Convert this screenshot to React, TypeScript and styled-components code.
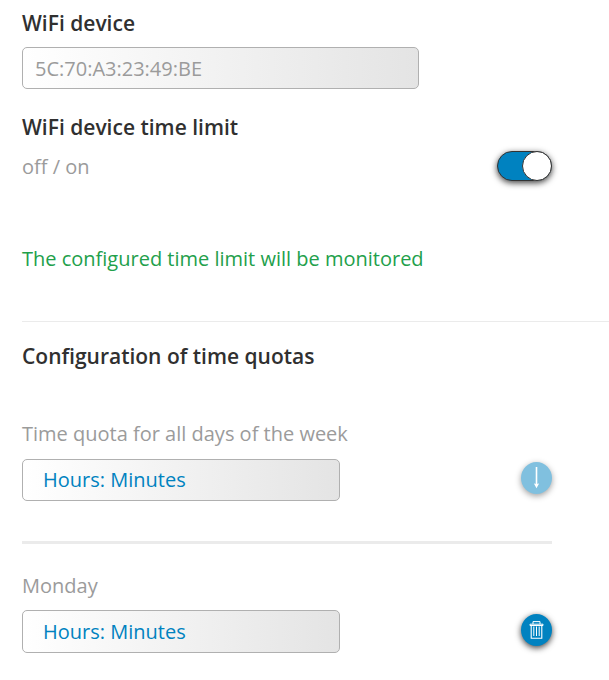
import React from "react";
import styled, { createGlobalStyle } from "styled-components";

const GlobalStyle = createGlobalStyle`
  * { box-sizing: border-box; }
  body {
    margin: 0;
    background: #fff;
    font-family: "Open Sans", "Noto Sans", sans-serif;
    font-size: 20px;
    line-height: 28px;
    color: #9b9b9b;
  }
`;

const Page = styled.main`
  display: flex;
  flex-direction: column;
  height: 680px;
  padding: 9px 0 0 22px;
  overflow: hidden;
`;

const Heading = styled.h2<{ $top?: number }>`
  margin: ${(p) => p.$top ?? 0}px 0 0;
  font-size: 21px;
  font-weight: 600;
  line-height: 28px;
  color: #303030;
`;

const Field = styled.div<{ $width: number; $height?: number; $inset?: number; $accent?: boolean }>`
  display: flex;
  align-items: center;
  flex: none;
  width: ${(p) => p.$width}px;
  height: ${(p) => p.$height ?? 42}px;
  padding-left: ${(p) => p.$inset ?? 12}px;
  border: 1px solid #b0b0b0;
  border-radius: 5px;
  background: linear-gradient(to right, #fff, #e4e4e4);
  color: ${(p) => (p.$accent ? "#0082c0" : "#9b9b9b")};
`;

const DeviceField = styled(Field)`
  margin: 10px 0 24px;
  padding-top: 2px;
`;

const Row = styled.div`
  display: flex;
  justify-content: space-between;
  width: 530px;
`;

const SwitchRow = styled(Row)`
  height: 30px;
  margin-top: 10px;
`;

const OptionLabel = styled.span`
  margin-top: 2px;
`;

const Switch = styled.button`
  display: flex;
  justify-content: flex-end;
  width: 55px;
  height: 30px;
  padding: 0;
  border: 1px solid #333;
  border-radius: 15px;
  background: #0082c0;
  box-shadow: 0 2px 6px rgba(0, 0, 0, 0.75);
`;

const Knob = styled.span`
  width: 30px;
  height: 30px;
  margin: -1px;
  border: 1px solid #333;
  border-radius: 50%;
  background: #fff;
`;

const Status = styled.p`
  margin: 64px 0 48px;
  color: #22a04b;
`;

const Divider = styled.hr`
  flex: none;
  width: 100%;
  height: 1px;
  margin: 0;
  border: 0;
  background: #ebebeb;
`;

const QuotaDivider = styled(Divider)`
  width: 530px;
  height: 3px;
  margin: 40px 0 28px;
`;

const QuotaLabel = styled.label<{ $top?: number; $gap: number }>`
  margin: ${(p) => p.$top ?? 0}px 0 ${(p) => p.$gap}px;
`;

const RoundButton = styled.button<{ $muted?: boolean; $top: number }>`
  display: flex;
  align-items: center;
  justify-content: center;
  width: 31px;
  height: 32px;
  margin-top: ${(p) => p.$top}px;
  padding: 0;
  border: 0;
  border-radius: 50%;
  background: ${(p) => (p.$muted ? "#80c0df" : "#0082c0")};
  box-shadow: 0 2px 6px rgba(0, 0, 0, ${(p) => (p.$muted ? 0.38 : 0.75)});
`;

const ArrowIcon = () => (
  <svg width="31" height="32" viewBox="0 0 31 32" fill="none">
    <path d="M15.5 5v17" stroke="#fff" strokeWidth="1.6" />
    <path d="M12.9 21.4l2.6.6 2.6-.6-2.6 4.8z" fill="#fff" />
  </svg>
);

const TrashIcon = () => (
  <svg width="31" height="32" viewBox="0 0 31 32" fill="none" stroke="#fff">
    <path d="M9 11.5V10.2h13v1.3zM12 10V7.6h7V10" strokeWidth="1" />
    <path d="M10.2 12v12.2h10.6V12" strokeWidth="1.1" />
    <path d="M12.8 12.5v9.5M15.5 12.5v9.5M18.2 12.5v9.5" strokeWidth="1" />
  </svg>
);

export default function App() {
  return (
    <>
      <GlobalStyle />
      <Page>
        <Heading>WiFi device</Heading>
        <DeviceField $width={397}>5C:70:A3:23:49:BE</DeviceField>
        <Heading>WiFi device time limit</Heading>
        <SwitchRow>
          <OptionLabel>off / on</OptionLabel>
          <Switch role="switch" aria-checked="true" aria-label="WiFi device time limit">
            <Knob />
          </Switch>
        </SwitchRow>
        <Status>The configured time limit will be monitored</Status>
        <Divider />
        <Heading $top={20}>Configuration of time quotas</Heading>
        <QuotaLabel $top={50} $gap={11}>Time quota for all days of the week</QuotaLabel>
        <Row>
          <Field $width={318} $inset={20} $accent>Hours: Minutes</Field>
          <RoundButton $top={3} $muted aria-label="Apply to all days">
            <ArrowIcon />
          </RoundButton>
        </Row>
        <QuotaDivider />
        <QuotaLabel $gap={10}>Monday</QuotaLabel>
        <Row>
          <Field $width={318} $height={43} $inset={20} $accent>Hours: Minutes</Field>
          <RoundButton $top={4} aria-label="Delete quota">
            <TrashIcon />
          </RoundButton>
        </Row>
      </Page>
    </>
  );
}
